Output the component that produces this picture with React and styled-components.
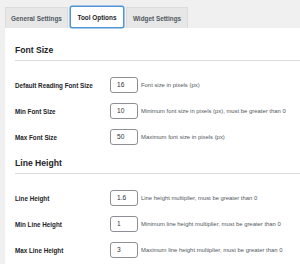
import React from "react";
import styled, { createGlobalStyle } from "styled-components";

const Global = createGlobalStyle`
  html, body { margin: 0; padding: 0; background: #f0f0f1; }
  body { font-family: "Liberation Sans", Arial, sans-serif; color: #1d2327; }
`;

const Page = styled.div`
  padding-left: 5px;
  width: 295px;
  height: 264px;
  overflow: hidden;
`;

const TabBar = styled.div`
  display: flex;
  align-items: flex-end;
  gap: 2px;
  height: 28px;
`;

const Tab = styled.div`
  display: flex;
  align-items: center;
  justify-content: center;
  box-sizing: border-box;
  white-space: nowrap;
  font-size: 6.4px;
  font-weight: 700;
  color: ${(p) => (p.$active ? "#1d2327" : "#50575e")};
  background: ${(p) => (p.$active ? "#fff" : "#e7e7e8")};
  border: 1px solid ${(p) => (p.$active ? "#4f94d4" : "#dcdcde")};
  border-bottom: ${(p) => (p.$active ? "1px solid #4f94d4" : "none")};
  border-radius: ${(p) => (p.$active ? "2px" : "0")};
  box-shadow: ${(p) => (p.$active ? "0 0 0 0.5px #4f94d4" : "none")};
  height: ${(p) => (p.$active ? "22px" : "21px")};
  width: ${(p) => p.$w}px;
`;

const Panel = styled.div`
  background: #fff;
  padding: 15px 0 20px 10px;
  min-height: 240px;
`;

const SectionTitle = styled.h2`
  margin: 0;
  font-size: 8.6px;
  font-weight: 700;
  line-height: 14px;
  color: #1d2327;
`;

const Divider = styled.div`
  height: 1px;
  background: #dcdcde;
  margin: 3px 0 16px;
`;

const Rows = styled.div`
  display: flex;
  flex-direction: column;
  gap: 10px;
  margin-bottom: 11px;
`;

const Row = styled.div`
  display: grid;
  grid-template-columns: 92px 28px 1fr;
  column-gap: 3px;
  align-items: center;
  height: 16px;
`;

const Label = styled.label`
  font-size: 6.3px;
  font-weight: 700;
  color: #1d2327;
  white-space: nowrap;
`;

const Input = styled.div`
  box-sizing: border-box;
  height: 16px;
  border: 1px solid #8c8f94;
  border-radius: 3px;
  background: #fff;
  font-size: 6.6px;
  line-height: 14px;
  padding-left: 6px;
  color: #2c3338;
`;

const Desc = styled.span`
  font-size: 5.9px;
  color: #50575e;
  white-space: nowrap;
`;

const sections = [
  {
    title: "Font Size",
    rows: [
      ["Default Reading Font Size", "16", "Font size in pixels (px)"],
      ["Min Font Size", "10", "Minimum font size in pixels (px), must be greater than 0"],
      ["Max Font Size", "50", "Maximum font size in pixels (px)"],
    ],
  },
  {
    title: "Line Height",
    rows: [
      ["Line Height", "1.6", "Line height multiplier, must be greater than 0"],
      ["Min Line Height", "1", "Minimum line height multiplier, must be greater than 0"],
      ["Max Line Height", "3", "Maximum line height multiplier, must be greater than 0"],
    ],
  },
];

export default function App() {
  return (
    <>
      <Global />
      <Page>
        <TabBar>
          <Tab $w={63}>General Settings</Tab>
          <Tab $active $w={54}>Tool Options</Tab>
          <Tab $w={62}>Widget Settings</Tab>
        </TabBar>
        <Panel>
          {sections.map((s) => (
            <section key={s.title}>
              <SectionTitle>{s.title}</SectionTitle>
              <Divider />
              <Rows>
                {s.rows.map(([l, v, d]) => (
                  <Row key={l}>
                    <Label>{l}</Label>
                    <Input>{v}</Input>
                    <Desc>{d}</Desc>
                  </Row>
                ))}
              </Rows>
            </section>
          ))}
        </Panel>
      </Page>
    </>
  );
}
